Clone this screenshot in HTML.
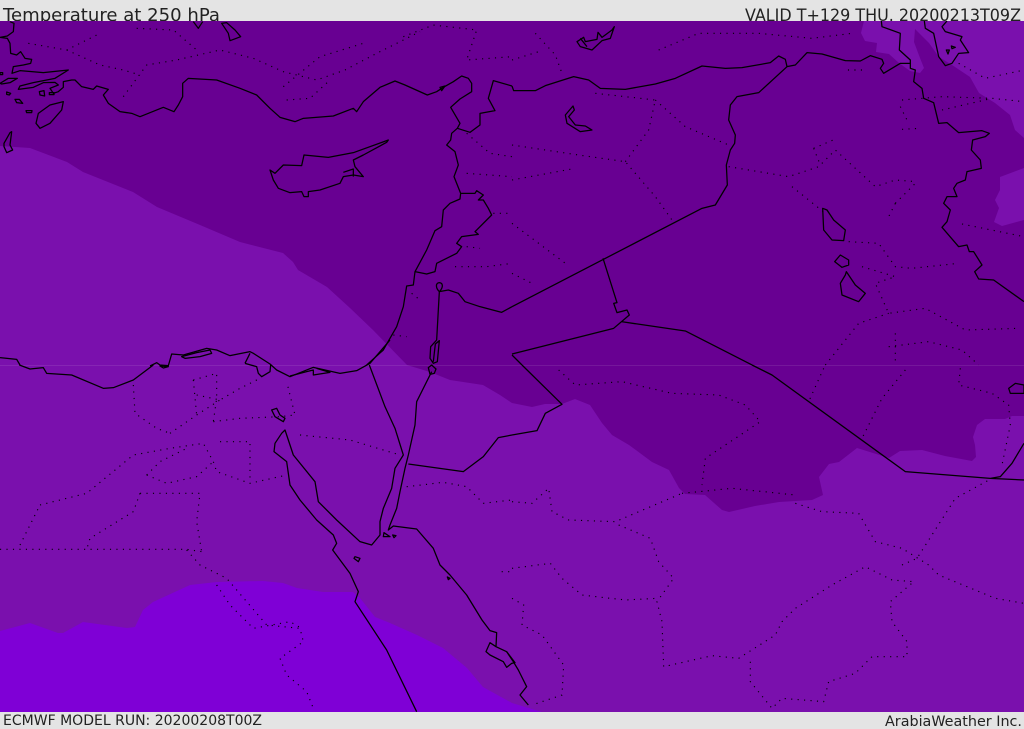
<!DOCTYPE html>
<html><head><meta charset="utf-8"><style>
html,body{margin:0;padding:0;width:1024px;height:729px;overflow:hidden;background:#e4e4e4}
svg{display:block}
text{font-family:"DejaVu Sans",sans-serif;fill:#222}
.c{fill:none;stroke:#000;stroke-width:3.8;stroke-linejoin:round}
.d{fill:none;stroke:#000;stroke-width:3.4;stroke-dasharray:3.4 16}
</style></head><body>
<svg width="1024" height="729" viewBox="0 0 1024 729" xmlns="http://www.w3.org/2000/svg">
<rect width="1024" height="729" fill="#e4e4e4"/>
<text x="3" y="21" font-size="17.6" textLength="217" lengthAdjust="spacingAndGlyphs">Temperature at 250 hPa</text>
<text x="745" y="21" font-size="16.5" textLength="276" lengthAdjust="spacingAndGlyphs">VALID T+129 THU. 20200213T09Z</text>
<text x="3" y="725" font-size="14" textLength="259" lengthAdjust="spacingAndGlyphs">ECMWF MODEL RUN: 20200208T00Z</text>
<text x="885" y="726" font-size="14" textLength="137" lengthAdjust="spacingAndGlyphs">ArabiaWeather Inc.</text>
<svg x="0" y="21" width="1024" height="691" viewBox="0 21 1024 691">
<rect x="0" y="21" width="1024" height="691" fill="#680092"/>
<path fill="#7a10ad" d="M0,146 30,148 67,162 83,172 133,192 157,207 200,225 240,242 283,253 293,262 298,270 327,287 350,308 373,330 407,365 430,372 450,380 483,385 500,395 512,403 532,407 545,404 562,404 575,399 590,405 602,423 612,435 629,445 652,462 669,470 679,488 685,494 705,495 722,510 729,512 755,506 779,502 812,500 823,495 819,477 829,464 839,462 857,448 889,458 900,451 922,450 945,456 972,461 976,457 975,445 973,437 977,425 985,419 1005,419 1012,416 1024,416 1024,712 0,712Z"/>
<path fill="#7a10ad" d="M864,21 861,33 865,41 877,43 876,52 889,54 899,63 910,71 920,73 924,68 920,58 914,42 915,29 929,43 939,57 952,65 970,77 979,93 995,103 1010,115 1015,130 1024,138 1024,21Z"/>
<path fill="#7a10ad" d="M1024,168 1000,177 1000,190 995,200 999,208 994,222 1002,226 1024,220Z"/>
<path fill="#7f00d6" d="M0,631 30,623 58,633 63,633 83,622 127,628 135,627 143,610 153,602 190,585 217,582 263,581 283,583 297,588 323,592 353,592 360,598 375,617 390,623 417,635 443,648 467,668 483,687 512,703 542,712 0,712Z"/>
<rect x="0" y="365" width="1024" height="1" fill="#fff" opacity=".09"/>

<g transform="scale(.33333)">
<path class="d" d="M85,130 200,150 260,120 300,100M200,150 300,195 370,210 420,225M370,290 440,195 530,180 660,150 760,175 850,215 950,240 1035,210 1130,160 1260,95M410,85 520,90 590,150M850,260 960,170 1090,130M860,300 930,295 990,240M1210,110 1300,75 1430,90 1400,180 1536,170M1400,400 1470,460 1536,470M1365,800 1460,800 1536,790M1400,520 1536,530M1480,640 1536,640M1400,740 1440,745M1235,880 1260,900M1180,1005 1220,1010"/>
<path class="c" d="M30,65 42,70 40,95 22,108 0,112 22,115 30,130 32,160 50,165 62,155 75,175 95,178 92,190 70,195 40,200 36,220 60,212 130,218 205,210 165,235 100,248 60,258 55,268 100,262 130,248 165,247 175,255 150,265 160,280 175,275 190,262 190,245 215,240 225,240 245,260 280,268 290,258 325,268 310,285 325,310 360,335 395,340 420,350 490,322 522,335 535,315 548,290 548,250 565,235 650,240 720,265 770,285 810,325 840,352 885,365 910,355 1000,348 1060,325 1070,335 1090,305 1140,262 1185,243 1215,255 1282,285 1310,275 1330,262 1360,245 1385,228 1405,235 1415,250 1415,275 1380,297 1352,322 1380,370 1372,385 1355,400 1352,420 1340,435 1365,455 1375,495 1362,530 1382,580 1380,597 1350,610 1330,630 1325,680 1305,692 1280,750 1245,815 1240,855 1220,858 1210,920 1190,980 1150,1050 1100,1095M0,1073 50,1078 60,1095"/>
<path class="c" d="M1372,385 1410,397 1440,375 1440,340 1485,332 1465,295 1480,242 1536,258M1245,815 1280,822 1305,815 1310,790 1370,760 1385,740 1370,730 1385,710 1435,703 1425,695 1475,645 1465,625 1450,600 1435,600 1450,585 1430,572 1425,580 1382,580M1318,875 1345,870 1375,880 1395,905 1440,920 1505,937 1536,920M1318,848C1305,850 1308,865 1318,875 1328,865 1332,850 1318,848ZM1318,875 1310,1020 1292,1040 1290,1075 1300,1090 1312,1085 1318,1022 1306,1032 1300,1085M810,510 825,520 850,495 905,497 912,465 985,472 1060,458 1165,420 1160,427 1090,465 1060,480 1065,500 1090,530 1060,525 1030,530 1020,550 960,570 925,575 925,590 912,590 905,575 870,578 835,565 820,540ZM1030,517 1060,507 1060,530M190,305 185,330 150,370 120,385 108,370 115,340 150,315ZM12,430 30,398 35,395 30,435 38,450 20,458 12,440ZM580,65 595,85 608,65M665,70 680,68 705,90 722,110 690,122 685,100ZM0,250 25,235 52,235 30,248 5,252ZM20,276 32,280 28,285 20,283ZM45,298 58,298 68,310 50,308ZM78,332 96,332 95,338 80,338ZM118,275 132,272 134,288 120,285ZM0,218 8,218 8,224 0,224ZM1320,262 1335,258 1325,272ZM148,278 162,278 162,284 148,284Z"/>
</g>

<g transform="translate(512,0) scale(.33333)">
<path class="d" d="M70,100 130,165 150,220M0,180 80,155M440,150 560,100 740,100 900,115 1020,100M1050,210 1000,210M430,300 520,380 650,435M0,435 200,465 340,485 430,590 480,660M0,540 190,505M340,485 410,390 430,300M250,280 430,300M650,500 830,530 920,500 970,450 1090,560 1150,540 1215,545M905,445 975,415M905,445 925,495M840,560 940,640M1170,300 1290,290 1440,295 1536,305M1170,388 1225,385M1150,610 1215,545M1150,610 1130,650M1350,672 1536,710M1010,725 1100,730 1150,800 1200,805 1340,790M1050,800 1150,830 1090,850 1130,940 1240,925 1360,990 1520,985M940,1095 1040,970 1130,940M1130,1040 1250,1025 1350,1050 1400,1095M1290,330 1440,295M0,670 160,790M0,820 60,850M1150,1000 1150,1095M1340,190 1420,235 1536,210M1165,320 1190,370"/>
<path class="c" d="M0,258 5,272 70,272 100,257 185,230 230,240 265,265 340,268 430,252 490,235 570,198 640,205 690,203 775,188 800,168 820,178 825,200 850,195 885,158 930,162 1000,182 1045,183 1075,167 1110,178 1115,190 1105,205 1115,220 1165,190 1195,190 1195,205 1210,210 1205,245 1230,265 1235,295 1265,308 1280,370 1305,368 1340,398 1410,392 1432,400 1420,410 1382,420 1378,450 1405,480 1408,505 1365,515 1360,540 1335,550 1325,565 1335,590 1305,590 1295,610 1315,630 1305,665 1290,682 1340,740 1365,735 1372,755 1385,755 1410,795 1388,815 1400,837 1445,840 1536,905"/>
<path class="c" d="M1108,63 1110,80 1165,100 1162,150 1195,180 1195,190M1237,63 1240,85 1265,100 1280,170 1300,197 1320,190 1340,160 1370,158 1345,120 1350,110 1300,95 1290,80 1305,63M1303,150 1312,150 1308,162ZM1318,138 1330,142 1320,146ZM825,200 740,278 675,290 655,315 650,360 670,405 668,430 655,450 643,495 646,555 610,615 570,625 0,920M0,1062 305,985 352,945 345,930 315,938 305,910 315,908 273,775M30,1095 0,1065M328,965 520,993 720,1095"/>
<path class="c" d="M195,125 215,112 220,125 255,118 258,97 270,112 300,90 307,80 295,115 270,122 240,150 205,140ZM205,115 225,140M183,318 160,345 165,370 205,395 240,390 220,378 190,375 170,350 187,330ZM932,625 945,630 965,660 1000,690 995,722 960,720 935,690ZM985,765 1010,780 1010,795 990,802 968,785ZM1003,815 1000,825 985,850 990,885 1040,905 1060,880 1030,855Z"/>
</g>

<g transform="translate(0,365) scale(.33333)">
<path class="d" d="M400,60 405,145 470,190 510,205M510,205 590,150 660,105M580,45 590,150M580,45 650,25 650,100 640,170M590,90 660,105 720,70 780,40M640,170 720,160 840,155 885,150 860,50M660,230 750,230 750,350M120,420 260,385 400,270 510,250 610,235 640,290 650,320 750,355 860,330M60,540 120,420M440,330 500,355 590,335 640,290M440,330 480,290 560,250M0,553 560,553 605,560M420,385 600,385 590,470 605,560M420,385 400,440 270,520 260,553M560,555 600,600 680,640 800,780 900,790 910,830 840,880 860,930 920,980 940,1030M650,660 690,720 760,790 870,770 905,790M900,210 1050,225 1200,270M1220,365 1330,352 1400,365 1450,415 1536,405M1505,620 1536,620"/>
<path class="c" d="M58,0 90,12 130,8 140,25 215,30 310,70 340,68 400,45 460,0M1285,8 1295,0 1308,12 1303,25 1290,28Z"/>
<path class="c" d="M1108,0 1155,125 1185,190 1210,270 1185,310 1175,370 1150,430 1140,470 1140,510 1115,540 1080,530 1010,465 955,410 945,350 880,270 855,195 845,205 825,235 822,260 860,290 870,360 900,405 950,465 1000,510 1010,535 998,555 1050,625 1075,680 1065,710 1160,855 1250,1040"/>
<path class="c" d="M1295,20 1250,110 1245,180 1225,270 1215,310 1200,380 1190,430 1170,480 1165,495 1180,483 1250,492 1300,550 1320,600 1350,630 1400,690 1446,765 1470,797 1490,803 1488,845 1520,860 1540,890 1555,915 1580,965 1560,990 1585,1020"/>
<path class="c" d="M1488,845 1470,833 1458,860 1470,870 1510,890 1520,907 1535,895 1545,893 1520,860M815,135 830,130 840,150 855,160 850,170 825,155ZM1065,575 1080,580 1075,590 1062,580ZM1152,503 1170,515 1150,515ZM1178,510 1188,512 1182,518ZM1342,636 1350,640 1345,644ZM1225,297 1390,320 1450,275 1495,218 1536,210"/>
</g>

<g transform="translate(150,340) scale(.33333)">
<path class="c" d="M0,78 20,68 30,75 55,77 65,42 100,45 170,25 200,30 240,47 300,35 310,40 360,72 380,90 420,110 490,82 570,100 620,92 660,70 720,0"/>
<path class="c" d="M95,50 140,38 180,30 185,40 150,50 105,55ZM285,70 300,40M285,70 320,80 325,100 335,110 360,95 362,75M420,108 470,95 490,90 490,105 540,97 500,85M30,78 55,80 40,84Z"/>
</g>

<g transform="translate(512,365) scale(.33333)">
<path class="d" d="M140,15 190,60 330,50 480,85 620,90 700,120 745,170 580,280 570,360M510,385 660,370 850,390M0,410 60,415 110,370 120,440 170,465 310,470 510,385M320,480 415,520 440,590 485,640 435,710 450,770 455,905 600,872 680,880 790,810 810,770 850,730 960,660 1060,605 1140,645 1205,650 1135,710 1140,770 1185,830 1185,875 1080,875 1030,925 950,950 935,1010 810,1000 780,1030 715,950 715,880M0,610 115,595 150,640 210,690 340,705 435,700M850,415 930,440 1040,445 1090,530 1170,550 1250,600 1280,630 1450,700 1536,715M1170,600 1215,580 1330,400 1440,340M0,700 35,720 30,780 90,810 155,900 150,990 60,1020M935,10 890,110M1180,15 1110,100 1050,220M1345,10 1340,60 1440,85 1490,120 1495,180 1470,300"/>
<path class="c" d="M0,210 75,197 100,145 150,118 30,0M720,0 780,30 1180,320 1435,340 1536,345M1435,340 1465,335 1500,295 1536,235M1490,70 1510,55 1536,60 1536,85 1495,85Z"/>
</g>
</svg>
</svg>
</body></html>
